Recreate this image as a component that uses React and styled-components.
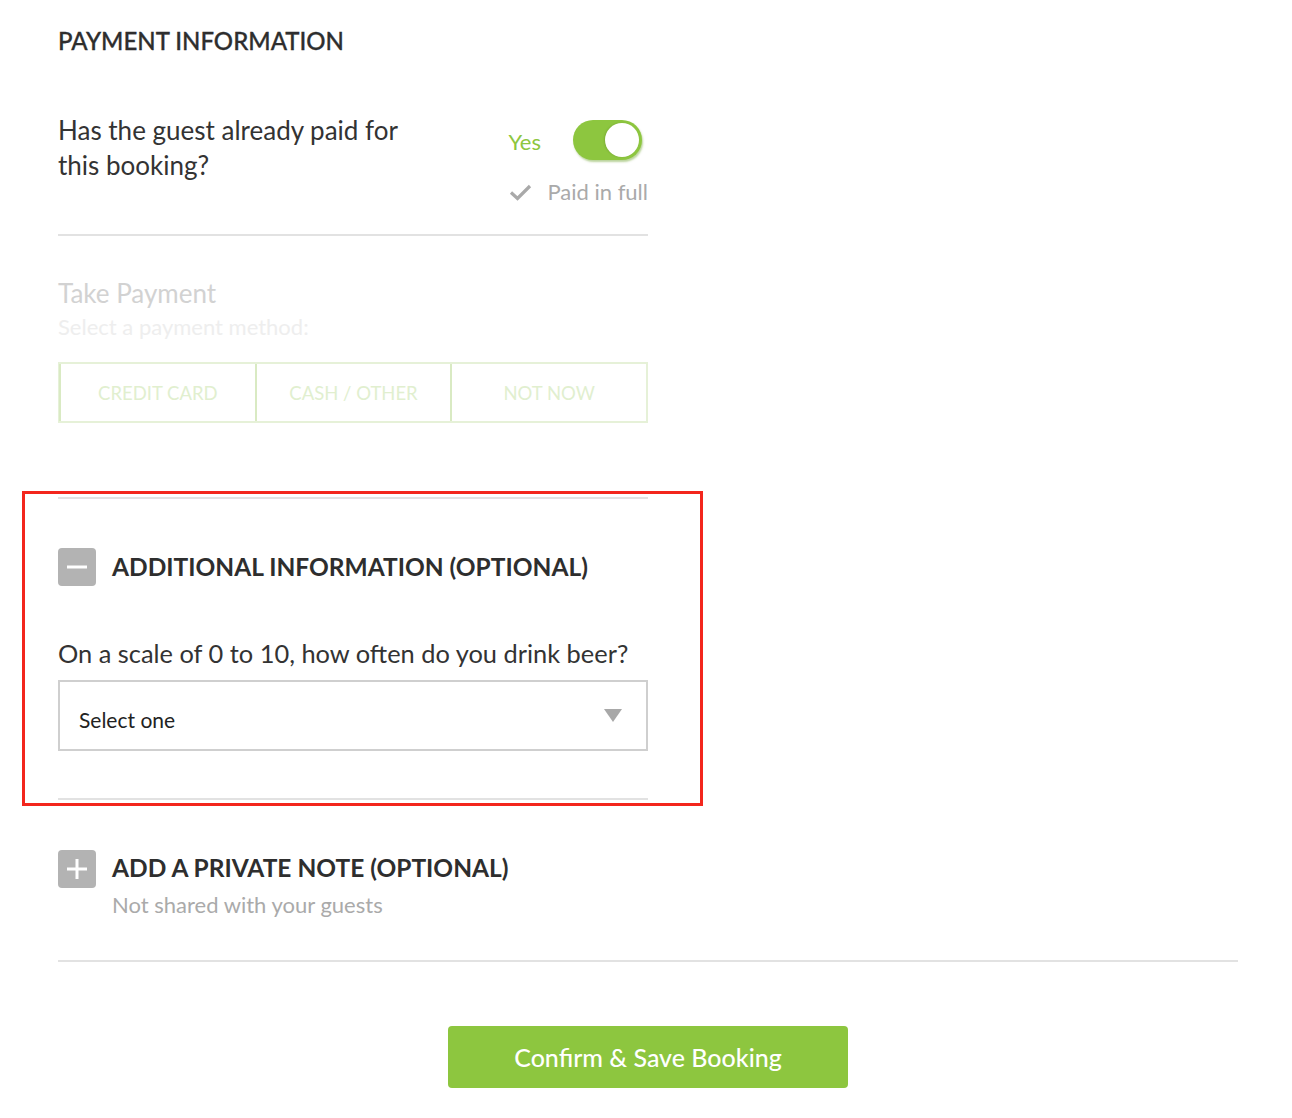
import styled, { createGlobalStyle } from "styled-components";

const GlobalStyle = createGlobalStyle`
  body {
    margin: 0;
    background: #fff;
    font-family: "Lato", "Liberation Sans", sans-serif;
    color: #333;
  }
`;

const App = () => {
  return (
    <Page>
      <GlobalStyle />
      <Narrow>
        <SectionTitle>PAYMENT INFORMATION</SectionTitle>
        <PaidRow>
          <Question>Has the guest already paid for this booking?</Question>
          <PaidSide>
            <ToggleLine>
              <YesLabel>Yes</YesLabel>
              <Toggle>
                <Knob />
              </Toggle>
            </ToggleLine>
            <PaidNote>
              <svg width="23" height="18" viewBox="0 0 23 18">
                <path
                  d="M2 9.5 L8.5 15.5 L21 3"
                  fill="none"
                  stroke="#a9a9a9"
                  strokeWidth="3.2"
                />
              </svg>
              Paid in full
            </PaidNote>
          </PaidSide>
        </PaidRow>
        <Divider />
        <TakePayment>
          <FadedTitle>Take Payment</FadedTitle>
          <FadedSub>Select a payment method:</FadedSub>
          <MethodRow>
            <Method>CREDIT CARD</Method>
            <Method>CASH / OTHER</Method>
            <Method>NOT NOW</Method>
          </MethodRow>
        </TakePayment>
      </Narrow>

      <Highlight>
        <Divider />
        <CollapseHead>
          <IconBox>
            <svg width="38" height="38" viewBox="0 0 38 38">
              <rect x="9" y="17.5" width="20" height="3" fill="#fff" />
            </svg>
          </IconBox>
          <CollapseTitle>ADDITIONAL INFORMATION (OPTIONAL)</CollapseTitle>
        </CollapseHead>
        <FieldLabel>On a scale of 0 to 10, how often do you drink beer?</FieldLabel>
        <SelectBox>
          <span>Select one</span>
          <svg width="18" height="13" viewBox="0 0 18 13">
            <path d="M0 0 H18 L9 13 Z" fill="#a8a8a8" />
          </svg>
        </SelectBox>
        <Divider />
      </Highlight>

      <Narrow>
        <NoteHead>
          <IconBox>
            <svg width="38" height="38" viewBox="0 0 38 38">
              <rect x="9" y="17.5" width="20" height="3" fill="#fff" />
              <rect x="17.5" y="9" width="3" height="20" fill="#fff" />
            </svg>
          </IconBox>
          <div>
            <CollapseTitle>ADD A PRIVATE NOTE (OPTIONAL)</CollapseTitle>
            <NoteSub>Not shared with your guests</NoteSub>
          </div>
        </NoteHead>
      </Narrow>

      <Divider />
      <Footer>
        <ConfirmButton>Confirm &amp; Save Booking</ConfirmButton>
      </Footer>
    </Page>
  );
};
export default App;

const Page = styled.main`
  width: 1180px;
  margin: 0 0 0 58px;
  padding-top: 28px;
  padding-bottom: 30px;
`;
const Narrow = styled.div`
  width: 590px;
`;
const SectionTitle = styled.h2`
  margin: 0;
  font-size: 24px;
  font-weight: 500;
  color: #2e2e2e;
  line-height: 26px;
  -webkit-text-stroke: 0.3px #2e2e2e;
`;
const PaidRow = styled.div`
  display: flex;
  justify-content: space-between;
  align-items: flex-start;
  margin-top: 66px;
  padding-bottom: 29px;
`;
const Question = styled.div`
  width: 360px;
  font-size: 26px;
  line-height: 35px;
  color: #333;
  margin-top: -7px;
`;
const PaidSide = styled.div`
  display: flex;
  flex-direction: column;
  align-items: flex-end;
`;
const ToggleLine = styled.div`
  display: flex;
  align-items: center;
  gap: 32px;
  margin-right: 6px;
`;
const YesLabel = styled.span`
  color: #8dc63f;
  font-size: 22px;
  line-height: 26px;
  margin-top: 4px;
`;
const Toggle = styled.div`
  width: 69px;
  height: 40px;
  border-radius: 20px;
  background: #8dc63f;
  display: flex;
  align-items: center;
  justify-content: flex-end;
  padding-right: 3px;
  box-sizing: border-box;
  box-shadow: 1px 2px 2px rgba(120, 170, 60, 0.5);
`;
const Knob = styled.div`
  width: 34px;
  height: 34px;
  border-radius: 50%;
  background: #fff;
  box-shadow: -1px 0 2px rgba(0, 0, 0, 0.12);
`;
const PaidNote = styled.div`
  display: flex;
  align-items: center;
  gap: 15px;
  margin-top: 19px;
  font-size: 22px;
  line-height: 26px;
  color: #aaa;
`;
const Divider = styled.hr`
  margin: 0;
  border: 0;
  border-top: 2px solid #e2e2e2;
`;
const TakePayment = styled.div`
  padding-top: 42px;
  padding-bottom: 68px;
`;
const FadedTitle = styled.div`
  font-size: 26px;
  color: #d2d2d2;
  line-height: 30px;
`;
const FadedSub = styled.div`
  font-size: 22px;
  color: #eeeeee;
  line-height: 26px;
  margin-top: 6px;
`;
const MethodRow = styled.div`
  display: grid;
  grid-template-columns: 1fr 1fr 1fr;
  margin-top: 22px;
  border: 2px solid #e6f1d8;
  border-left-width: 1px;
`;
const Method = styled.div`
  height: 57px;
  display: flex;
  align-items: center;
  justify-content: center;
  font-size: 18.5px;
  color: #e1efcf;
  border-left: 2px solid #d9eac3;
`;
const Highlight = styled.section`
  width: 590px;
  margin-left: -36px;
  padding: 3px 52px 3px 33px;
  border: 3px solid #f3261d;
`;
const CollapseHead = styled.div`
  display: flex;
  align-items: center;
  gap: 16px;
  margin-top: 49px;
`;
const IconBox = styled.div`
  width: 38px;
  height: 38px;
  flex-shrink: 0;
  border-radius: 4px;
  background: #b3b3b3;
  display: flex;
`;
const CollapseTitle = styled.h3`
  margin: 0;
  font-size: 24.5px;
  font-weight: 700;
  color: #2e2e2e;
  line-height: 36px;
`;
const FieldLabel = styled.div`
  margin-top: 51px;
  font-size: 25.4px;
  line-height: 32px;
  color: #333;
`;
const SelectBox = styled.div`
  margin-top: 11px;
  margin-bottom: 47px;
  height: 71px;
  box-sizing: border-box;
  border: 2px solid #cfcfcf;
  display: flex;
  align-items: center;
  justify-content: space-between;
  padding: 8px 24px 0 19px;
  font-size: 21px;
  color: #222;
  svg {
    margin-top: -9px;
  }
`;
const NoteHead = styled.div`
  display: flex;
  align-items: flex-start;
  gap: 16px;
  margin-top: 44px;
  padding-bottom: 42px;
`;
const NoteSub = styled.div`
  font-size: 22px;
  color: #aaa;
  line-height: 26px;
  margin-top: 6px;
`;
const Footer = styled.div`
  display: flex;
  justify-content: center;
  padding-top: 64px;
`;
const ConfirmButton = styled.button`
  width: 400px;
  height: 62px;
  border: 0;
  border-radius: 4px;
  background: #8dc63f;
  color: #fff;
  font-family: inherit;
  font-size: 25px;
  font-weight: 500;
  cursor: pointer;
`;
